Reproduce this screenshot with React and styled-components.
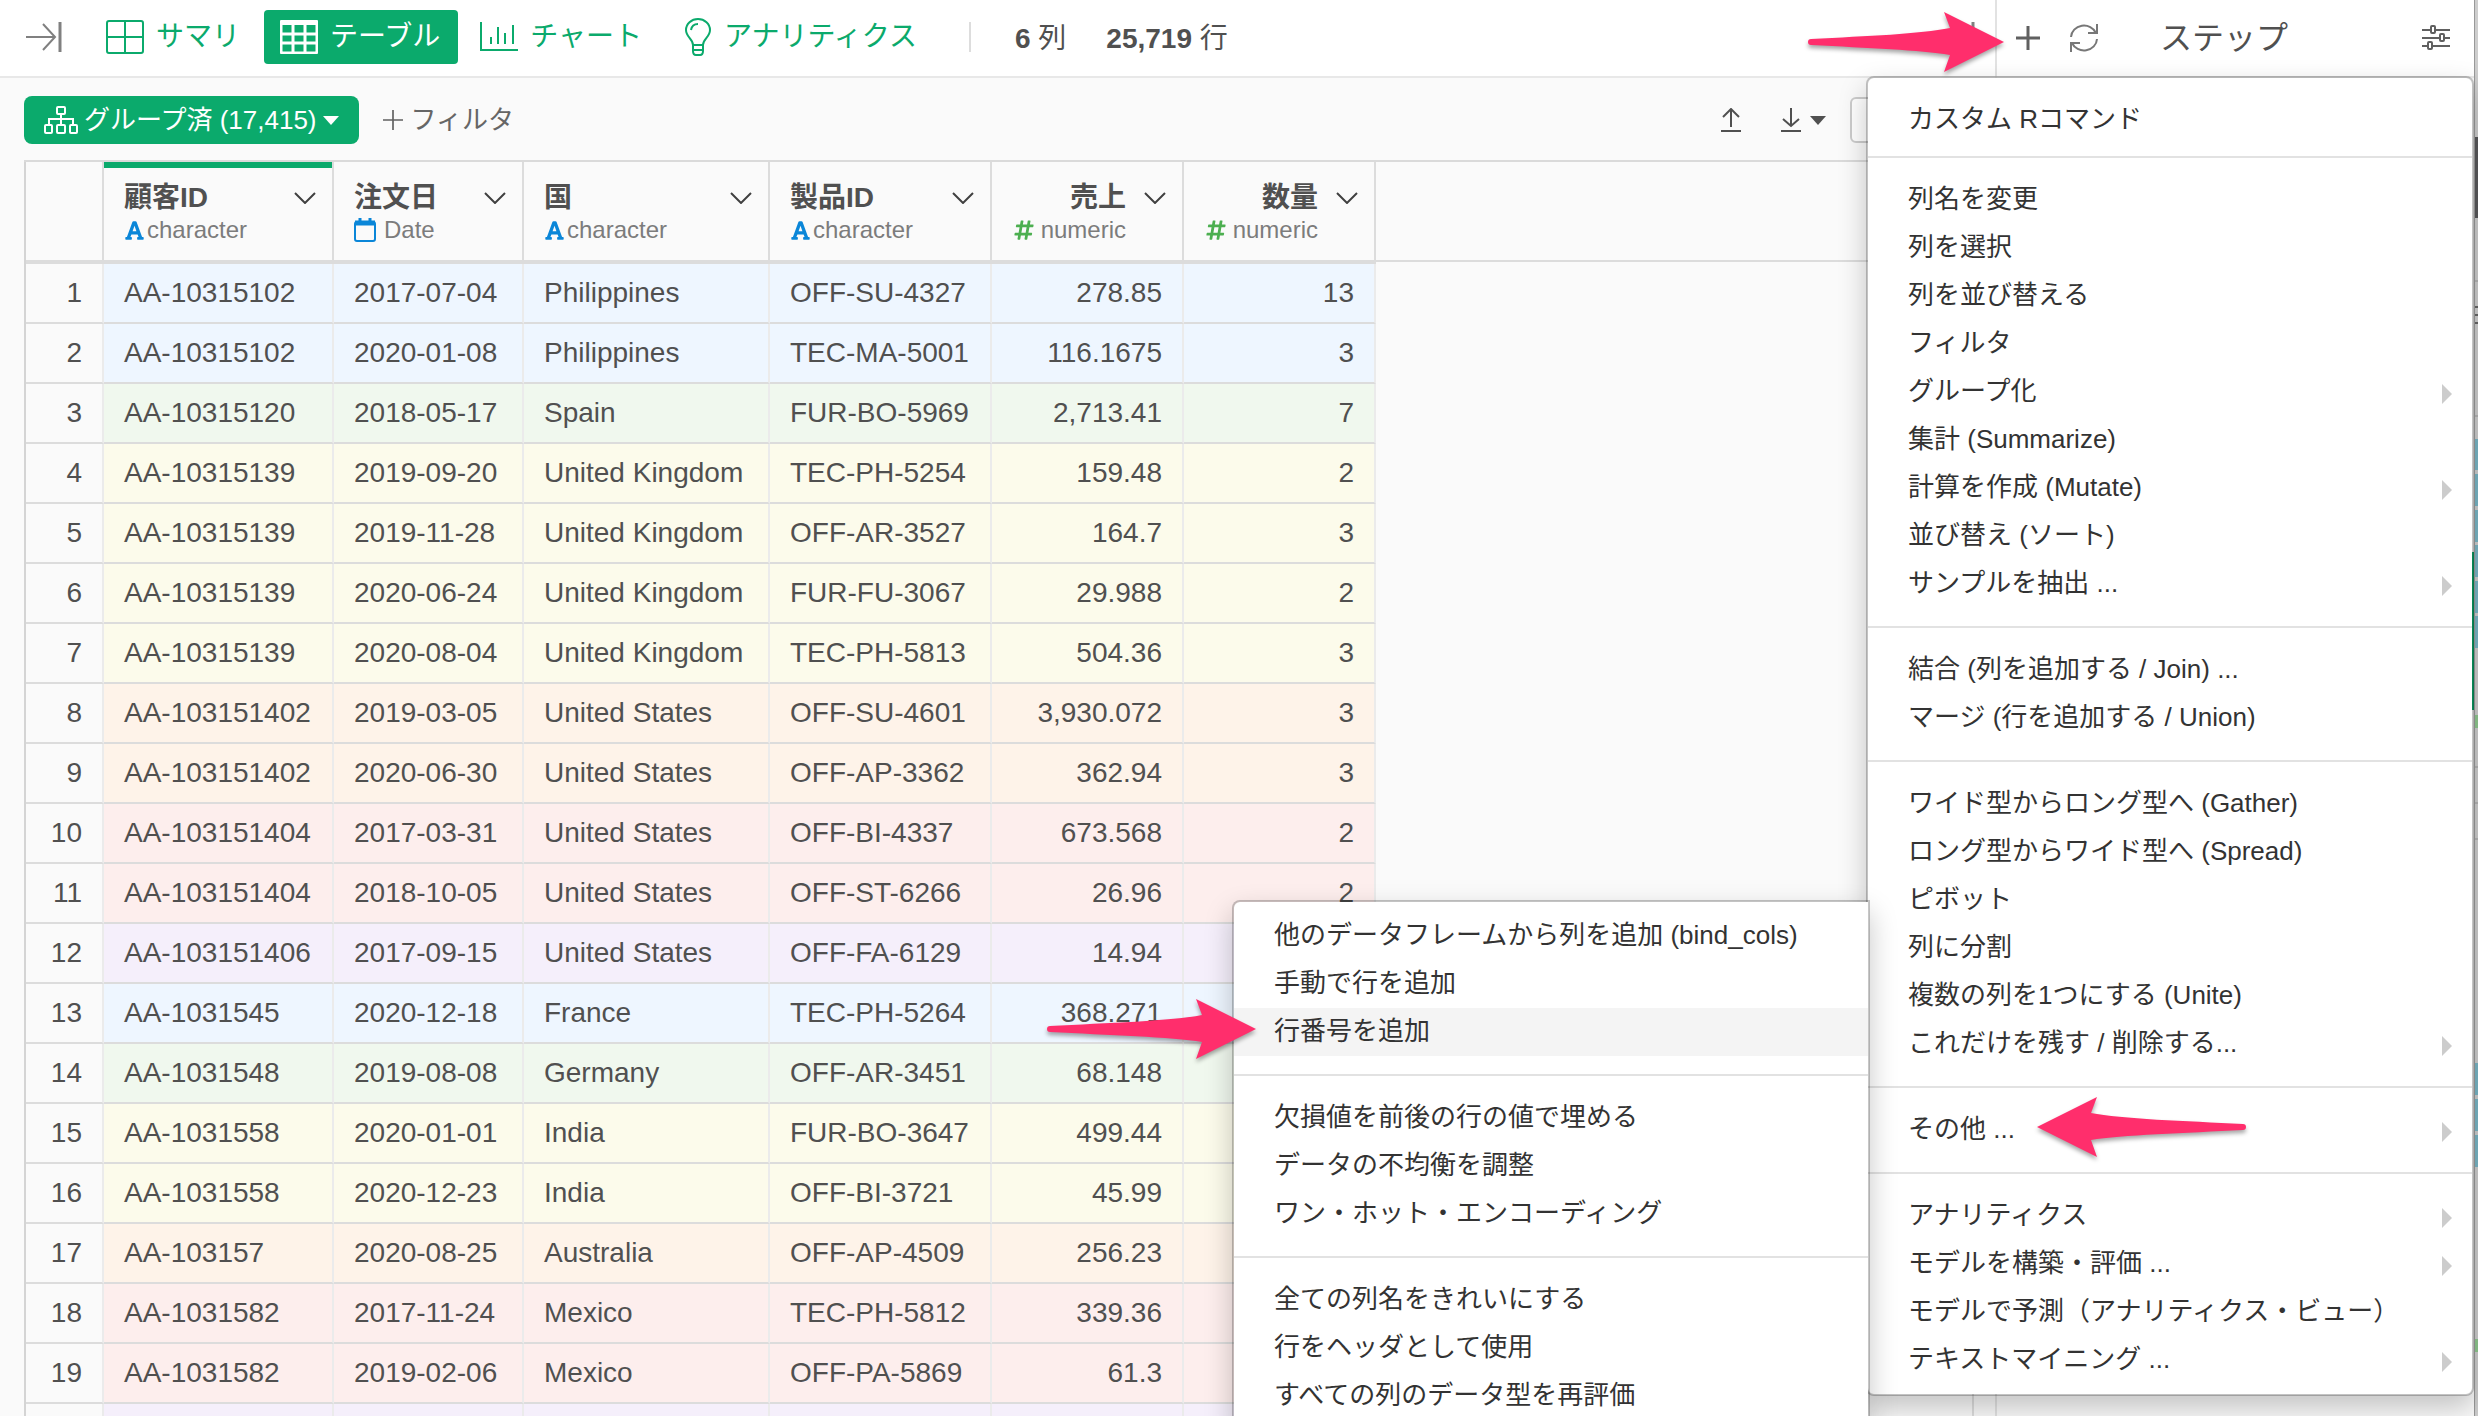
import React from "react";
import styled, { createGlobalStyle } from "styled-components";
import { FaFont, FaHashtag } from "react-icons/fa";

const columns = [
  { name: "顧客ID", type: "character", width: 230, grouped: true },
  { name: "注文日", type: "Date", width: 190 },
  { name: "国", type: "character", width: 246 },
  { name: "製品ID", type: "character", width: 222 },
  { name: "売上", type: "numeric", width: 192 },
  { name: "数量", type: "numeric", width: 192 },
];

const colors = {
  blue: "#eef6ff",
  green: "#f0f8ee",
  yellow: "#fcfbeb",
  orange: "#fef3e9",
  red: "#fdeeed",
  purple: "#f5effb",
};

const rows = [
  ["blue", "AA-10315102", "2017-07-04", "Philippines", "OFF-SU-4327", "278.85", "13"],
  ["blue", "AA-10315102", "2020-01-08", "Philippines", "TEC-MA-5001", "116.1675", "3"],
  ["green", "AA-10315120", "2018-05-17", "Spain", "FUR-BO-5969", "2,713.41", "7"],
  ["yellow", "AA-10315139", "2019-09-20", "United Kingdom", "TEC-PH-5254", "159.48", "2"],
  ["yellow", "AA-10315139", "2019-11-28", "United Kingdom", "OFF-AR-3527", "164.7", "3"],
  ["yellow", "AA-10315139", "2020-06-24", "United Kingdom", "FUR-FU-3067", "29.988", "2"],
  ["yellow", "AA-10315139", "2020-08-04", "United Kingdom", "TEC-PH-5813", "504.36", "3"],
  ["orange", "AA-103151402", "2019-03-05", "United States", "OFF-SU-4601", "3,930.072", "3"],
  ["orange", "AA-103151402", "2020-06-30", "United States", "OFF-AP-3362", "362.94", "3"],
  ["red", "AA-103151404", "2017-03-31", "United States", "OFF-BI-4337", "673.568", "2"],
  ["red", "AA-103151404", "2018-10-05", "United States", "OFF-ST-6266", "26.96", "2"],
  ["purple", "AA-103151406", "2017-09-15", "United States", "OFF-FA-6129", "14.94", ""],
  ["blue", "AA-1031545", "2020-12-18", "France", "TEC-PH-5264", "368.271", ""],
  ["green", "AA-1031548", "2019-08-08", "Germany", "OFF-AR-3451", "68.148", ""],
  ["yellow", "AA-1031558", "2020-01-01", "India", "FUR-BO-3647", "499.44", ""],
  ["yellow", "AA-1031558", "2020-12-23", "India", "OFF-BI-3721", "45.99", ""],
  ["orange", "AA-103157", "2020-08-25", "Australia", "OFF-AP-4509", "256.23", ""],
  ["red", "AA-1031582", "2017-11-24", "Mexico", "TEC-PH-5812", "339.36", ""],
  ["red", "AA-1031582", "2019-02-06", "Mexico", "OFF-PA-5869", "61.3", ""],
  ["purple", "", "", "", "", "", ""],
];

const stepMenu = [
  [{ label: "カスタム Rコマンド" }],
  [
    { label: "列名を変更" },
    { label: "列を選択" },
    { label: "列を並び替える" },
    { label: "フィルタ" },
    { label: "グループ化", sub: true },
    { label: "集計 (Summarize)" },
    { label: "計算を作成 (Mutate)", sub: true },
    { label: "並び替え (ソート)" },
    { label: "サンプルを抽出 ...", sub: true },
  ],
  [
    { label: "結合 (列を追加する / Join) ..." },
    { label: "マージ (行を追加する / Union)" },
  ],
  [
    { label: "ワイド型からロング型へ (Gather)" },
    { label: "ロング型からワイド型へ (Spread)" },
    { label: "ピボット" },
    { label: "列に分割" },
    { label: "複数の列を1つにする (Unite)" },
    { label: "これだけを残す / 削除する...", sub: true },
  ],
  [{ label: "その他 ...", sub: true, arrow: "left" }],
  [
    { label: "アナリティクス", sub: true },
    { label: "モデルを構築・評価 ...", sub: true },
    { label: "モデルで予測（アナリティクス・ビュー）" },
    { label: "テキストマイニング ...", sub: true },
  ],
];

const otherMenu = [
  [
    { label: "他のデータフレームから列を追加 (bind_cols)" },
    { label: "手動で行を追加" },
    { label: "行番号を追加", active: true, arrow: "right" },
  ],
  [
    { label: "欠損値を前後の行の値で埋める" },
    { label: "データの不均衡を調整" },
    { label: "ワン・ホット・エンコーディング" },
  ],
  [
    { label: "全ての列名をきれいにする" },
    { label: "行をヘッダとして使用" },
    { label: "すべての列のデータ型を再評価" },
  ],
];

// [gap above, height, color]
const previewBlocks = [
  [137, 81, "#58585a"],
  [62, 2, "#b4b4b4"],
  [24, 2, "#666"],
  [6, 2, "#666"],
  [6, 2, "#666"],
  [91, 2, "#b4b4b4"],
  [22, 31, "#79b5c5"],
  [4, 32, "#79b5c5"],
  [4, 32, "#79b5c5"],
  [3, 32, "#79b5c5"],
  [4, 32, "#79b5c5"],
  [3, 32, "#79b5c5"],
  [67, 13, "#8fc88f"],
  [38, 2, "#b4b4b4"],
  [34, 2, "#b4b4b4"],
  [34, 2, "#b4b4b4"],
  [223, 32, "#79b5c5"],
  [4, 32, "#79b5c5"],
  [4, 32, "#79b5c5"],
  [172, 13, "#8fc88f"],
];

function Arrow({ length }) {
  const neck = length - 54;
  const wing = length - 60;
  return (
    <svg width={length} height="60" viewBox={`0 0 ${length} 60`} aria-hidden="true">
      <path
        fill="#ff2e6c"
        d={`M3 27 C60 24 ${neck - 30} 22 ${neck} 16 L${wing} 0 L${length} 30 L${wing} 60 L${neck} 43 C${neck - 30} 38 60 36 3 33 Q0 33 0 30 Q0 27 3 27Z`}
      />
    </svg>
  );
}

function CollapseIcon() {
  return (
    <svg width="36" height="32" viewBox="0 0 36 32" fill="none" stroke="#808080" strokeWidth="2">
      <path d="M0 16H29M17 3L29 16L17 29" />
      <path d="M34 1V31" strokeWidth="3" />
    </svg>
  );
}

function SummaryIcon() {
  return (
    <svg width="38" height="34" viewBox="0 0 38 34" fill="none" stroke="currentColor" strokeWidth="2">
      <rect x="1" y="1" width="36" height="32" rx="2" />
      <path d="M19 1V33M1 17H37" />
    </svg>
  );
}

function TableIcon() {
  return (
    <svg width="38" height="34" viewBox="0 0 38 34" fill="none" stroke="currentColor">
      <rect x="1" y="1" width="36" height="32" rx="2" strokeWidth="3" />
      <path d="M1 3H37" strokeWidth="4" />
      <path d="M13 3V33M25 3V33M1 14H37M1 23H37" strokeWidth="3" />
    </svg>
  );
}

function ChartIcon() {
  return (
    <svg width="38" height="30" viewBox="0 0 38 30" fill="none" stroke="currentColor" strokeWidth="2">
      <path d="M1 0V28H38" />
      <path d="M11 15V22M18 5V22M25 11V22M33 3V22" />
    </svg>
  );
}

function BulbIcon() {
  return (
    <svg width="30" height="38" viewBox="-2 0 30 38" fill="none" stroke="currentColor" strokeWidth="2">
      <path d="M9 27C9 21 2 19 2 12A12 11 0 0 1 26 12C26 19 19 21 19 27Z" />
      <path d="M9 27V33Q9 37 12 37H16Q19 37 19 33V27M9 32H19" />
      <path d="M7 12Q8 6 14 6" />
    </svg>
  );
}

function TreeIcon() {
  return (
    <svg width="34" height="28" viewBox="0 0 34 28" fill="none" stroke="#fff" strokeWidth="2">
      <rect x="13" y="1" width="8" height="7" rx="1" />
      <rect x="1" y="19" width="7" height="8" rx="1" />
      <rect x="13" y="19" width="8" height="8" rx="1" />
      <rect x="26" y="19" width="7" height="8" rx="1" />
      <path d="M17 8V19M5 19V13H29V19" />
    </svg>
  );
}

function PlusIcon({ size, stroke }) {
  return (
    <svg width={size} height={size} viewBox="0 0 24 24" fill="none" stroke="#606060" strokeWidth={stroke}>
      <path d="M12 0V24M0 12H24" />
    </svg>
  );
}

function RefreshIcon() {
  return (
    <svg width="28" height="28" viewBox="0 0 28 28" fill="none" stroke="#777" strokeWidth="2">
      <path d="M1 13A13 12 0 0 1 26 9M27 0V9H18" />
      <path d="M27 15A13 12 0 0 1 2 19M1 28V19H10" />
    </svg>
  );
}

function SlidersIcon() {
  return (
    <svg width="28" height="26" viewBox="0 0 28 26" fill="none" stroke="#606060" strokeWidth="2">
      <path d="M0 5H9M13 5H28M0 13H18M22 13H28M0 21H6M10 21H28" />
      <rect x="9" y="1" width="4" height="7" rx="1" />
      <rect x="18" y="9" width="4" height="7" rx="1" />
      <rect x="6" y="17" width="4" height="7" rx="1" />
    </svg>
  );
}

function TransferIcon({ down }) {
  return (
    <svg width="20" height="24" viewBox="0 0 20 24" fill="none" stroke="#505050" strokeWidth="2">
      <path d={down ? "M10 0V18M2 11L10 18L18 11" : "M10 19V1M2 9L10 1L18 9"} />
      <path d="M0 23H20" />
    </svg>
  );
}

function ChevronIcon() {
  return (
    <svg width="22" height="12" viewBox="0 0 22 12" fill="none" stroke="#404040" strokeWidth="2">
      <path d="M1 1L11 11L21 1" />
    </svg>
  );
}

function CalendarIcon() {
  return (
    <svg width="22" height="24" viewBox="0 0 22 24" fill="none" stroke="#0a86d8" strokeWidth="2">
      <rect x="1" y="4" width="20" height="19" rx="2" />
      <path d="M1 5H21" strokeWidth="5" />
      <path d="M6 0V5M16 0V5" strokeWidth="3" />
    </svg>
  );
}

function TypeIcon({ type }) {
  if (type === "numeric") return <FaHashtag size={22} color="#4caf50" />;
  if (type === "Date") return <CalendarIcon />;
  return <FaFont size={21} color="#0a86d8" />;
}

function MenuGroups({ groups }) {
  return groups.map((group, i) => (
    <Group key={i}>
      {group.map((item) => (
        <Item key={item.label}>
          <ItemButton type="button" $active={item.active}>
            {item.label}
            {item.sub && <SubMark />}
          </ItemButton>
          {item.arrow && (
            <ItemArrow $side={item.arrow}>
              <Arrow length={209} />
            </ItemArrow>
          )}
        </Item>
      ))}
    </Group>
  ));
}

function App() {
  return (
    <Page>
      <GlobalStyle />
      <Main>
        <TopBar>
          <IconButton type="button" aria-label="パネルを開く">
            <CollapseIcon />
          </IconButton>
          <Tabs>
            <Tab type="button">
              <SummaryIcon />
              サマリ
            </Tab>
            <Tab type="button" $active>
              <TableIcon />
              テーブル
            </Tab>
            <Tab type="button">
              <ChartIcon />
              チャート
            </Tab>
            <Tab type="button">
              <BulbIcon />
              アナリティクス
            </Tab>
          </Tabs>
          <Counts>
            <span>
              <b>6</b> 列
            </span>
            <span>
              <b>25,719</b> 行
            </span>
          </Counts>
          <IconButton type="button" aria-label="パネルを閉じる">
            <CollapseIcon />
          </IconButton>
        </TopBar>
        <Content>
          <ToolBar>
            <GroupButton type="button">
              <TreeIcon />
              グループ済 (17,415)
              <Caret />
            </GroupButton>
            <FilterButton type="button">
              <PlusIcon size={20} stroke={2} />
              フィルタ
            </FilterButton>
            <Tools>
              <IconButton type="button" aria-label="アップロード">
                <TransferIcon />
              </IconButton>
              <IconButton type="button" aria-label="ダウンロード">
                <TransferIcon down />
                <Caret />
              </IconButton>
              <Search type="text" aria-label="検索" />
            </Tools>
          </ToolBar>
          <Sheet>
            <Table>
              <colgroup>
                <NumberCol />
                {columns.map((col) => (
                  <Col key={col.name} $width={col.width} />
                ))}
              </colgroup>
              <thead>
                <tr>
                  <HeadCell aria-label="行番号" />
                  {columns.map((col) => (
                    <HeadCell key={col.name} scope="col" $grouped={col.grouped}>
                      <HeadInner>
                        <HeadText $right={col.type === "numeric"}>
                          <ColumnName>{col.name}</ColumnName>
                          <ColumnType $type={col.type}>
                            <TypeIcon type={col.type} />
                            {col.type}
                          </ColumnType>
                        </HeadText>
                        <HeadButton type="button" aria-label={col.name + "のメニュー"}>
                          <ChevronIcon />
                        </HeadButton>
                      </HeadInner>
                    </HeadCell>
                  ))}
                </tr>
              </thead>
              <tbody>
                {rows.map(([color, ...cells], i) => (
                  <tr key={i}>
                    <RowNumber scope="row">{cells[0] && i + 1}</RowNumber>
                    {cells.map((cell, j) => (
                      <Cell key={j} $color={colors[color]} $right={j > 3}>
                        {cell}
                      </Cell>
                    ))}
                  </tr>
                ))}
              </tbody>
            </Table>
            <SheetRest />
          </Sheet>
        </Content>
      </Main>
      <Side>
        <SideHeader>
          <AddButton type="button" aria-label="ステップを追加">
            <PlusIcon size={24} stroke={3} />
            <AddArrow>
              <Arrow length={196} />
            </AddArrow>
          </AddButton>
          <IconButton type="button" aria-label="更新">
            <RefreshIcon />
          </IconButton>
          <SideTitle>ステップ</SideTitle>
          <IconButton type="button" aria-label="設定">
            <SlidersIcon />
          </IconButton>
        </SideHeader>
        <ActiveStep />
        <StepMenu>
          <MenuGroups groups={stepMenu} />
          <OtherMenu>
            <MenuGroups groups={otherMenu} />
          </OtherMenu>
        </StepMenu>
      </Side>
      <Preview>
        {previewBlocks.map(([gap, height, color], i) => (
          <PreviewBlock key={i} $gap={gap} $height={height} $color={color} />
        ))}
      </Preview>
    </Page>
  );
}

export default App;

const GlobalStyle = createGlobalStyle`
  * {
    box-sizing: border-box;
  }
  body {
    margin: 0;
    background: #fafafa;
    color: #505050;
    font-family: "Liberation Sans", "Noto Sans CJK JP", sans-serif;
    font-size: 28px;
  }
  button {
    border: 0;
    padding: 0;
    background: none;
    color: inherit;
    font: inherit;
    cursor: pointer;
    white-space: nowrap;
  }
  svg {
    display: block;
    flex: none;
  }
`;

const Page = styled.div`
  display: grid;
  grid-template-columns: minmax(0, 1fr) 479px 4px;
  height: 100vh;
  overflow: hidden;
`;

const Main = styled.main`
  display: flex;
  flex-direction: column;
  min-width: 0;
  min-height: 0;
`;

const TopBar = styled.header`
  display: flex;
  align-items: center;
  flex: none;
  height: 78px;
  padding: 0 20px 2px 26px;
  background: #fff;
  border-bottom: 2px solid #e8e8e8;
`;

const IconButton = styled.button`
  display: flex;
  align-items: center;
  gap: 9px;
`;

const Tabs = styled.nav`
  display: flex;
  gap: 6px;
  margin-left: 28px;
`;

const Tab = styled.button`
  display: flex;
  align-items: center;
  gap: 12px;
  height: 54px;
  padding: 0 18px 0 16px;
  border-radius: 4px;
  line-height: 48px;
  color: ${(props) => (props.$active ? "#fff" : "#0baa6c")};
  background: ${(props) => (props.$active ? "#0baa6c" : "transparent")};
`;

const Counts = styled.div`
  display: flex;
  gap: 40px;
  flex: 1;
  height: 30px;
  margin-left: 34px;
  padding-left: 44px;
  border-left: 2px solid #ddd;
  line-height: 34px;
  white-space: nowrap;
`;

const Content = styled.div`
  display: flex;
  flex-direction: column;
  flex: 1;
  min-height: 0;
  margin-right: 21px;
  padding-left: 24px;
  border-right: 2px solid #ddd;
`;

const ToolBar = styled.div`
  display: flex;
  align-items: center;
  flex: none;
  height: 82px;
  padding-top: 2px;
  gap: 24px;
  font-size: 26px;
`;

const GroupButton = styled.button`
  display: flex;
  align-items: center;
  gap: 6px;
  height: 48px;
  padding: 0 20px;
  border-radius: 8px;
  background: #0baa6c;
  color: #fff;
  line-height: 48px;
`;

const Caret = styled.span`
  border: 8px solid transparent;
  border-top: 9px solid currentColor;
  border-bottom: 0;
`;

const FilterButton = styled.button`
  display: flex;
  align-items: center;
  gap: 8px;
  line-height: 48px;
  color: #666;
`;

const Tools = styled.div`
  display: flex;
  align-items: center;
  gap: 40px;
  margin-left: auto;
`;

const Search = styled.input`
  width: 122px;
  height: 46px;
  margin-left: -16px;
  border: 2px solid #ccc;
  border-radius: 6px;
  background: #fff;
`;

const Sheet = styled.div`
  display: flex;
  align-items: flex-start;
  min-height: 0;
  border-top: 2px solid #dadada;
`;

const Table = styled.table`
  flex: none;
  width: 1352px;
  table-layout: fixed;
  border-collapse: separate;
  border-spacing: 0;
  border-left: 2px solid #d4d4d4;
`;

const SheetRest = styled.div`
  flex: 1;
  height: 100px;
  border-bottom: 2px solid #dcdcdc;
`;

const NumberCol = styled.col`
  width: 78px;
`;

const Col = styled.col`
  width: ${(props) => props.$width}px;
`;

const HeadCell = styled.th`
  height: 102px;
  padding: 0;
  vertical-align: top;
  border-bottom: 4px solid #dcdcdc;
  box-shadow: inset -2px 0 #dcdcdc, inset 0 6px ${(props) => (props.$grouped ? "#0baa6c" : "transparent")};
`;

const HeadInner = styled.div`
  display: flex;
  align-items: flex-start;
  gap: 18px;
  padding: 18px 18px 0 20px;
`;

const HeadText = styled.div`
  display: flex;
  flex-direction: column;
  flex: 1;
  align-items: ${(props) => (props.$right ? "flex-end" : "flex-start")};
`;

const ColumnName = styled.span`
  line-height: 36px;
`;

const typeGaps = { character: 2, Date: 8, numeric: 6 };

const ColumnType = styled.span`
  display: flex;
  align-items: center;
  gap: ${(props) => typeGaps[props.$type]}px;
  height: 28px;
  font-size: 24px;
  font-weight: 400;
  color: #7c7c7c;
`;

const HeadButton = styled.button`
  padding: 12px 0;
`;

const Cell = styled.td`
  height: 60px;
  padding: 0 20px;
  border-bottom: 2px solid #dcdcdc;
  border-right: 2px solid #ebebeb;
  background: ${(props) => props.$color};
  text-align: ${(props) => (props.$right ? "right" : "left")};
  white-space: nowrap;
`;

const RowNumber = styled.th`
  padding: 0 20px;
  border-bottom: 2px solid #dcdcdc;
  border-right: 2px solid #ebebeb;
  font-weight: 400;
  text-align: right;
`;

const Side = styled.aside`
  position: relative;
  display: flex;
  flex-direction: column;
  border-left: 2px solid #e2e2e2;
`;

const SideHeader = styled.header`
  display: flex;
  align-items: center;
  gap: 30px;
  flex: none;
  height: 78px;
  padding: 0 24px 0 19px;
  background: #fff;
  border-bottom: 2px solid #e8e8e8;
`;

const SideTitle = styled.h2`
  flex: 1;
  margin: 0 0 0 32px;
  font-size: 32px;
  font-weight: 400;
  line-height: 40px;
`;

const AddButton = styled(IconButton)`
  position: relative;
`;

const AddArrow = styled.span`
  position: absolute;
  right: calc(100% + 12px);
  top: -14px;
  z-index: 3;
  filter: drop-shadow(0 3px 2px rgba(0, 0, 0, 0.35));
`;

const ActiveStep = styled.div`
  align-self: flex-end;
  width: 2px;
  height: 158px;
  margin-top: 474px;
  background: #0baa6c;
`;

const StepMenu = styled.div`
  position: absolute;
  top: 76px;
  right: 0;
  width: 608px;
  padding: 0 0 10px;
  border: 2px solid rgba(0, 0, 0, 0.22);
  border-radius: 8px;
  background: #fff;
  background-clip: padding-box;
  box-shadow: 0 12px 28px rgba(0, 0, 0, 0.22);
  color: #333;
  font-size: 26px;
  z-index: 1;
`;

const OtherMenu = styled.div`
  position: absolute;
  top: 822px;
  right: calc(100% - 2px);
  width: 638px;
  padding: 0 0 10px;
  border: 2px solid rgba(0, 0, 0, 0.22);
  border-radius: 8px 0 0 8px;
  background: #fff;
  background-clip: padding-box;
  box-shadow: 0 12px 28px rgba(0, 0, 0, 0.22);

  ul:first-child {
    padding-top: 10px;
  }
`;

const Group = styled.ul`
  margin: 0;
  padding: 18px 0;
  list-style: none;

  & + & {
    border-top: 2px solid #e2e2e2;
  }

  ${StepMenu} > &:first-child {
    padding-bottom: 12px;
  }

  &:last-of-type {
    padding-bottom: 0;
  }
`;

const Item = styled.li`
  position: relative;
`;

const ItemButton = styled.button`
  display: flex;
  align-items: center;
  justify-content: space-between;
  width: 100%;
  height: 48px;
  padding: 0 20px 2px 40px;
  line-height: 44px;
  background: ${(props) => (props.$active ? "#f4f4f4" : "transparent")};
`;

const SubMark = styled.span`
  margin-top: 6px;
  border: 10px solid transparent;
  border-left-color: #ccc;
  border-right: 0;
`;

const ItemArrow = styled.span`
  position: absolute;
  top: -9px;
  left: ${(props) => (props.$side === "left" ? 169 : -187)}px;
  z-index: 2;
  filter: drop-shadow(0 3px 2px rgba(0, 0, 0, 0.35));

  svg {
    transform: ${(props) => (props.$side === "left" ? "scaleX(-1)" : "none")};
  }
`;

const Preview = styled.div`
  border-left: 1px solid #999;
  background: #cdcdcd;
  overflow: hidden;
`;

const PreviewBlock = styled.div`
  height: ${(props) => props.$height}px;
  margin-top: ${(props) => props.$gap}px;
  background: ${(props) => props.$color};
`;
